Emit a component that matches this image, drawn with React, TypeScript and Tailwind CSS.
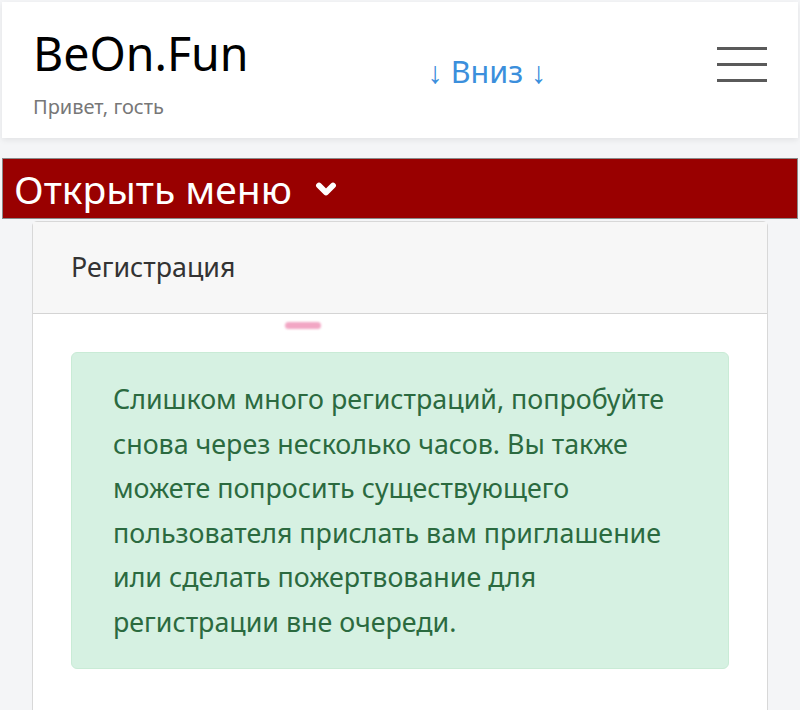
import { ChevronDown } from 'lucide-react';

const font = { fontFamily: '"Noto Sans", "Open Sans", sans-serif' };

const Header = () => {
  return (
    <header className="mx-[2px] mt-[2px] flex h-[136px] items-start bg-white shadow-[0_2px_6px_rgba(0,0,0,0.08)]">
      <div className="flex flex-col pl-[31px] pt-[23px]">
        <span className="text-[46.5px] leading-[56px] text-black">BeOn.Fun</span>
        <span className="mt-[13px] text-[20px] leading-[26px] text-[#777]">Привет, гость</span>
      </div>
      <a className="ml-[179px] mt-[48px] text-[30.5px] leading-[42px] text-[#3b8fdc]">↓ Вниз ↓</a>
      <div className="ml-auto mr-[31px] mt-[45px] flex w-[50px] flex-col gap-[13px]">
        <span className="h-[3px] bg-[#5a5a5a]" />
        <span className="h-[3px] bg-[#5a5a5a]" />
        <span className="h-[3px] bg-[#5a5a5a]" />
      </div>
    </header>
  );
};

export default function App() {
  return (
    <div className="h-[710px] overflow-hidden bg-[#f4f5f7]" style={font}>
      <Header />

      {/* menu toggle */}
      <button className="mx-[2px] mt-[20px] flex h-[61px] w-[796px] items-center gap-[20px] border border-[#8a8a8a] bg-[#990000] pl-[11px] text-white">
        <span className="text-[39px] leading-none">Открыть меню</span>
        <ChevronDown size={28} strokeWidth={5} />
      </button>

      <div className="mx-[32px] mt-[2px] rounded-t-[5px] border border-[#d8d8d8] bg-white">
        <div className="flex h-[92px] items-center border-b border-[#d4d4d4] bg-[#f7f7f7] px-[38px]">
          <span className="text-[26.8px] text-[#333]">Регистрация</span>
        </div>
        <div className="relative px-[38px] pb-[120px] pt-[38px]">
          <span className="absolute left-[252px] top-[8px] h-[7px] w-[36px] rounded-full bg-[#f2a6c4] blur-[1px]" />
          <div className="rounded-[6px] border border-[#c9ebd6] bg-[#d6f1e2] px-[41px] pb-[24px] pt-[24px] text-[26.8px] leading-[44.5px] text-[#2b6a3f]">
            Слишком много регистраций, попробуйте снова через несколько часов. Вы также можете попросить существующего пользователя прислать вам приглашение или сделать пожертвование для регистрации вне очереди.
          </div>
        </div>
      </div>
    </div>
  );
}
